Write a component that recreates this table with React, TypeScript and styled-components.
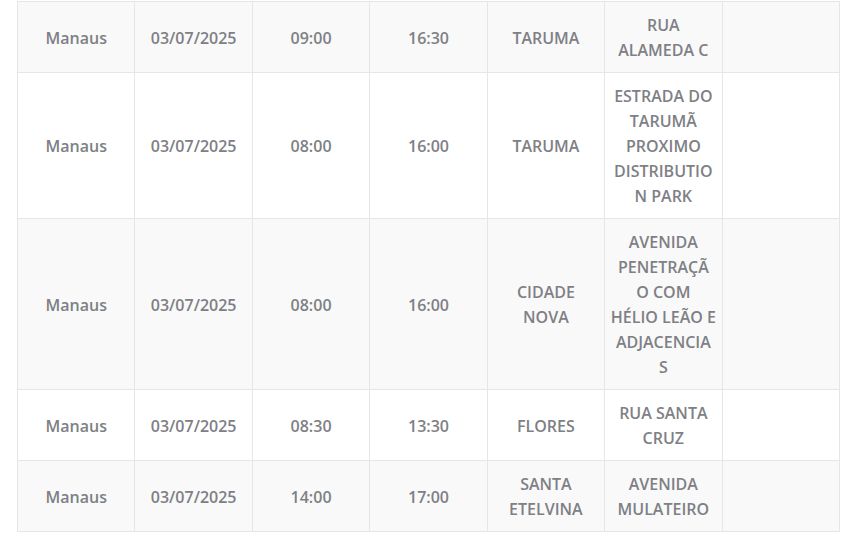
import React from 'react';
import styled, { createGlobalStyle } from 'styled-components';

const GlobalStyle = createGlobalStyle`
    html, body {
        margin: 0;
        padding: 0;
        background: #ffffff;
    }
`;

const Page = styled.div`
    padding: 1px 17px 0 17px;
    font-family: 'Open Sans', 'Liberation Sans', sans-serif;
`;

const Table = styled.table`
    width: 823px;
    border-collapse: collapse;
    table-layout: fixed;
`;

const Row = styled.tr<{ $striped: boolean }>`
    background-color: ${(p) => (p.$striped ? '#f9f9f9' : '#ffffff')};
`;

const Cell = styled.td`
    border: 1px solid #e6e6e6;
    padding: 11px 4px 9px;
    text-align: center;
    vertical-align: middle;
    font-size: 16px;
    font-weight: 600;
    line-height: 25px;
    color: #7e8085;
    white-space: nowrap;
`;

type Entry = {
    city: string;
    date: string;
    start: string;
    end: string;
    district: string[];
    address: string[];
};

const entries: Entry[] = [
    {
        city: 'Manaus',
        date: '03/07/2025',
        start: '09:00',
        end: '16:30',
        district: ['TARUMA'],
        address: ['RUA', 'ALAMEDA C'],
    },
    {
        city: 'Manaus',
        date: '03/07/2025',
        start: '08:00',
        end: '16:00',
        district: ['TARUMA'],
        address: ['ESTRADA DO', 'TARUMÃ', 'PROXIMO', 'DISTRIBUTIO', 'N PARK'],
    },
    {
        city: 'Manaus',
        date: '03/07/2025',
        start: '08:00',
        end: '16:00',
        district: ['CIDADE', 'NOVA'],
        address: ['AVENIDA', 'PENETRAÇÃ', 'O COM', 'HÉLIO LEÃO E', 'ADJACENCIA', 'S'],
    },
    {
        city: 'Manaus',
        date: '03/07/2025',
        start: '08:30',
        end: '13:30',
        district: ['FLORES'],
        address: ['RUA SANTA', 'CRUZ'],
    },
    {
        city: 'Manaus',
        date: '03/07/2025',
        start: '14:00',
        end: '17:00',
        district: ['SANTA', 'ETELVINA'],
        address: ['AVENIDA', 'MULATEIRO'],
    },
];

const Lines = ({ lines }: { lines: string[] }) => (
    <>
        {lines.map((line, i) => (
            <React.Fragment key={i}>
                {i > 0 && <br />}
                {line}
            </React.Fragment>
        ))}
    </>
);

const App = () => (
    <Page>
        <GlobalStyle />
        <Table>
            <tbody>
                {entries.map((e, index) => (
                    <Row $striped={index % 2 === 0} key={index}>
                        <Cell>{e.city}</Cell>
                        <Cell>{e.date}</Cell>
                        <Cell>{e.start}</Cell>
                        <Cell>{e.end}</Cell>
                        <Cell>
                            <Lines lines={e.district} />
                        </Cell>
                        <Cell>
                            <Lines lines={e.address} />
                        </Cell>
                        <Cell />
                    </Row>
                ))}
            </tbody>
        </Table>
    </Page>
);

export default App;
